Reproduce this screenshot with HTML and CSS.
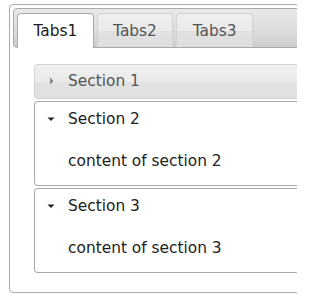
FILE: index.html
```html
<!DOCTYPE html>
<html>
<head>
<meta charset="utf-8">
<link rel="stylesheet" href="styles.css">
</head>
<body>
<div class="frame">
<div class="tabs">
  <ul class="tabs-nav">
    <li class="tab tab-active"><a class="tab-anchor">Tabs1</a></li>
    <li class="tab"><a class="tab-anchor">Tabs2</a></li>
    <li class="tab"><a class="tab-anchor">Tabs3</a></li>
  </ul>
  <div class="tabs-panel">
    <div class="accordion">
      <div class="acc-section">
        <div class="acc-header">
          <svg class="acc-icon" viewBox="0 0 16 16" width="16" height="16"><polygon points="7,4.5 10.5,8 7,11.5" fill="#888888"/></svg>
          Section 1
        </div>
      </div>
      <div class="acc-section acc-open">
        <div class="acc-header acc-header-active">
          <svg class="acc-icon" viewBox="0 0 16 16" width="16" height="16"><polygon points="4.5,6.5 11.5,6.5 8,10" fill="#222222"/></svg>
          Section 2
        </div>
        <div class="acc-content">content of section 2</div>
      </div>
      <div class="acc-section acc-open">
        <div class="acc-header acc-header-active">
          <svg class="acc-icon" viewBox="0 0 16 16" width="16" height="16"><polygon points="4.5,6.5 11.5,6.5 8,10" fill="#222222"/></svg>
          Section 3
        </div>
        <div class="acc-content">content of section 3</div>
      </div>
    </div>
  </div>
</div>
</div>
</body>
</html>
```

FILE: styles.css
```css
html, body {
  overflow: hidden;
}
body {
  margin: 4px 0 0 9px;
  background: #ffffff;
  font-family: "DejaVu Sans", Verdana, sans-serif;
  font-size: 15.4px;
  line-height: 18px;
  color: #222222;
}
.frame {
  width: 288px;
  height: 292px;
  overflow: hidden;
}
.tabs {
  width: 380px;
  padding: 3px;
  border: 1px solid #aaaaaa;
  border-radius: 4px;
  background: #ffffff;
}
.tabs-nav {
  display: flex;
  margin: 0;
  padding: 3px 3px 0;
  list-style: none;
  border: 1px solid #aaaaaa;
  border-radius: 4px;
  background: linear-gradient(to bottom, #e9e9e9 0%, #dcdcdc 55%, #cdcdcd 100%);
}
.tab {
  margin: 1px 3px 0 0;
  border: 1px solid #d3d3d3;
  border-bottom-width: 0;
  border-radius: 4px 4px 0 0;
  background: linear-gradient(to bottom, #eeeeee 0%, #ebebeb 50%, #e1e1e1 51%, #dedede 100%);
  white-space: nowrap;
}
.tab-anchor {
  display: block;
  padding: 7.7px 15.4px;
  color: #555555;
}
.tab-active {
  margin-bottom: -1px;
  padding-bottom: 1px;
  border-color: #aaaaaa;
  background: #ffffff;
}
.tab-active .tab-anchor {
  color: #212121;
}
.tabs-panel {
  padding: 15.4px 21px;
}
.accordion {
  display: flex;
  flex-direction: column;
  gap: 2px;
}
.acc-header {
  position: relative;
  padding: 7.7px 7.7px 7.7px 33px;
  border: 1px solid #d3d3d3;
  border-radius: 4px;
  background: linear-gradient(to bottom, #efefef 0%, #ebebeb 50%, #e2e2e2 51%, #e0e0e0 100%);
  color: #555555;
}
.acc-icon {
  position: absolute;
  left: 7.7px;
  top: 50%;
  margin-top: -8px;
}
.acc-header-active {
  border-color: #aaaaaa;
  border-bottom-width: 0;
  border-radius: 4px 4px 0 0;
  background: #ffffff;
  color: #212121;
  padding-bottom: 8.7px;
}
.acc-content {
  padding: 15.4px 33px;
  border: 1px solid #aaaaaa;
  border-top: 0;
  border-radius: 0 0 4px 4px;
  background: #ffffff;
  color: #222222;
}
```
